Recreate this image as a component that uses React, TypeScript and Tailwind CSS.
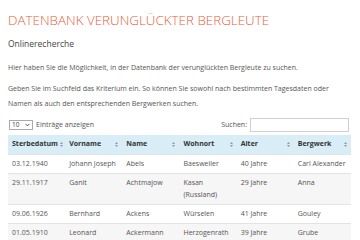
import React from "react";

// a single row of the search result table
interface Row {
  date: string;
  first: string;
  last: string;
  town: string;
  age: string;
  mine: string;
}

const rows: Row[] = [
  { date: "03.12.1940", first: "Johann Joseph", last: "Abels", town: "Baesweiler", age: "40 Jahre", mine: "Carl Alexander" },
  { date: "29.11.1917", first: "Ganit", last: "Achtmajow", town: "Kasan (Russland)", age: "29 Jahre", mine: "Anna" },
  { date: "09.06.1926", first: "Bernhard", last: "Ackens", town: "Würselen", age: "41 Jahre", mine: "Gouley" },
  { date: "01.05.1910", first: "Leonard", last: "Ackermann", town: "Herzogenrath", age: "39 Jahre", mine: "Grube" },
];

const columns = ["Sterbedatum", "Vorname", "Name", "Wohnort", "Alter", "Bergwerk"];

const SortIcon = () => (
  <svg width="3" height="5" viewBox="0 0 3 5" className="shrink-0">
    <path d="M1.5 0 L3 2 L0 2 Z" fill="#8f9aa2" />
    <path d="M1.5 5 L3 3 L0 3 Z" fill="#8f9aa2" />
  </svg>
);

export default function App() {
  return (
    <div
      className="w-[360px] h-[240px] overflow-hidden bg-white pl-2 pr-[9px] text-[7px] text-[#555]"
      style={{ fontFamily: '"Open Sans", sans-serif' }}
    >
      <h1 className="pt-[13px] text-[13.4px] leading-[14px] font-light text-[#e8603c]">
        DATENBANK VERUNGLÜCKTER BERGLEUTE
      </h1>
      <h2 className="mt-[11px] text-[8.5px] leading-[12px] text-[#444]">Onlinerecherche</h2>

      <p className="mt-[12px] leading-[12px]">
        Hier haben Sie die Möglichkeit, in der Datenbank der verunglückten Bergleute zu suchen.
      </p>
      <p className="mt-[7px] leading-[15px]">
        Geben Sie im Suchfeld das Kriterium ein. So können Sie sowohl nach bestimmten Tagesdaten oder Namen als auch den entsprechenden Bergwerken suchen.
      </p>

      <div className="mt-[7px] flex items-center justify-between pr-[2px]">
        <div className="flex items-center gap-[3px] pl-px">
          <div className="flex h-[10px] w-[24px] items-center justify-between border border-[#aaa] px-[2px] text-[6.5px] leading-none text-[#444]">
            <span>10</span>
            <svg width="5" height="4" viewBox="0 0 5 4">
              <path d="M0.6 0.9 L2.5 2.9 L4.4 0.9" stroke="#444" strokeWidth="0.9" fill="none" />
            </svg>
          </div>
          <span>Einträge anzeigen</span>
        </div>
        <div className="flex items-center gap-[3px]">
          <span>Suchen:</span>
          <div className="h-[14px] w-[99px] border border-[#d0d0d0] bg-white" />
        </div>
      </div>

      <table className="mt-[3px] w-[343px] table-fixed border-collapse">
        <thead>
          <tr className="bg-[#d9edf7] text-[#333]">
            {columns.map((c) => (
              <th key={c} className="h-[19px] px-[4px] text-left font-bold">
                <div className="flex items-center justify-between gap-[2px]">
                  <span className="whitespace-nowrap">{c}</span>
                  <SortIcon />
                </div>
              </th>
            ))}
          </tr>
        </thead>
        <tbody>
          {rows.map((r, i) => (
            <tr key={r.date} className={i % 2 === 1 ? "bg-[#f6f6f6]" : "bg-white"}>
              {[r.date, r.first, r.last, r.town, r.age, r.mine].map((v, j) => (
                <td
                  key={j}
                  className="border-t border-[#e3e3e3] px-[4px] pt-[3px] pb-[3px] align-top leading-[12px]"
                >
                  {v}
                </td>
              ))}
            </tr>
          ))}
        </tbody>
      </table>
    </div>
  );
}
